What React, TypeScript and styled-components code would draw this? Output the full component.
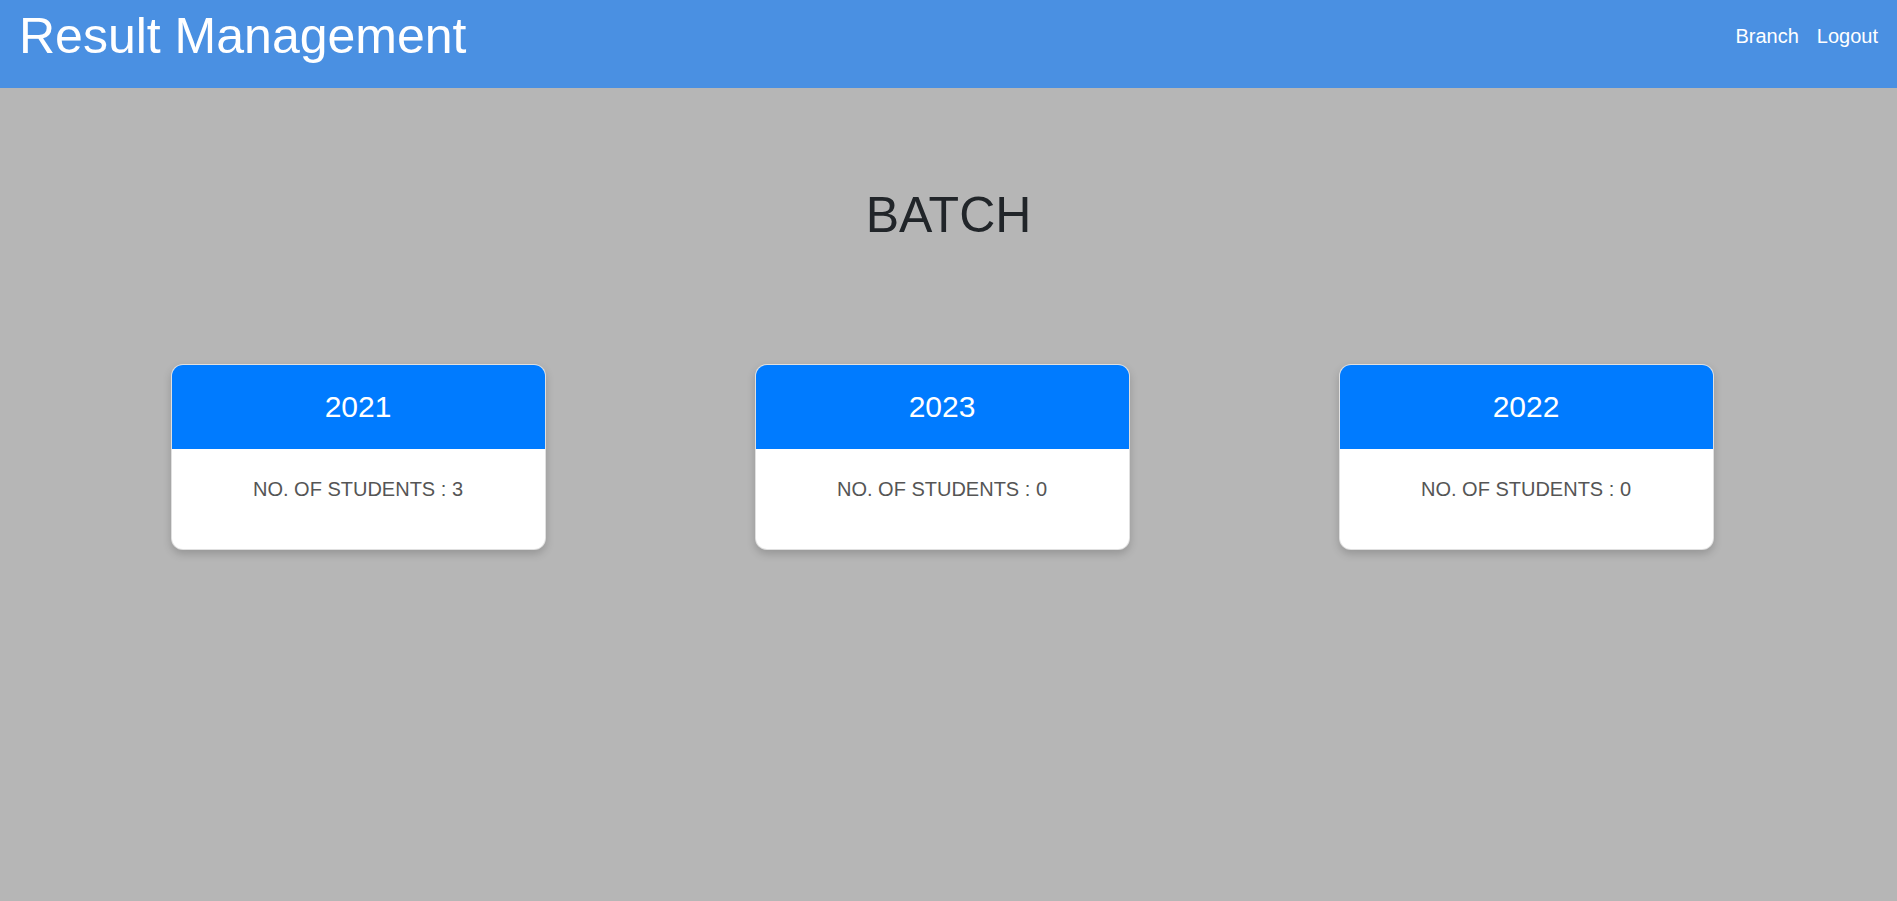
import styled, { createGlobalStyle } from "styled-components";

const batches = [
    { year: "2021", students: 3 },
    { year: "2023", students: 0 },
    { year: "2022", students: 0 },
];

export default function App() {
    return (
        <>
            <GlobalStyle />
            <Header>
                <Title>Result Management</Title>
                <Nav>
                    <NavLink href="#">Branch</NavLink>
                    <NavLink href="#">Logout</NavLink>
                </Nav>
            </Header>

            <Main>
                <Heading>BATCH</Heading>
                <CardRow>
                    {batches.map((batch) => (
                        <Card key={batch.year}>
                            <CardHeader>{batch.year}</CardHeader>
                            <CardBody>NO. OF STUDENTS : {batch.students}</CardBody>
                        </Card>
                    ))}
                </CardRow>
            </Main>
        </>
    );
}

const GlobalStyle = createGlobalStyle`
    * {
        box-sizing: border-box;
    }

    html, body {
        margin: 0;
        padding: 0;
        min-height: 100%;
        background: #b6b6b6;
        font-family: "Liberation Sans", Arial, sans-serif;
    }
`;

const Header = styled.header`
    height: 88px;

    display: flex;
    justify-content: space-between;
    align-items: flex-start;

    padding: 8px 19px 0 19px;

    background-color: #4a90e2;
`;

const Title = styled.h1`
    margin: 0;

    color: white;
    font-size: 50px;
    font-weight: 400;
    line-height: 1.15;
`;

const Nav = styled.nav`
    display: flex;
    gap: 18px;

    margin-top: 17px;
`;

const NavLink = styled.a`
    color: white;
    font-size: 20px;
    line-height: 23px;
    text-decoration: none;
`;

const Main = styled.main`
    display: flex;
    flex-direction: column;
    align-items: center;

    padding-top: 97px;
    min-height: 813px;
`;

const Heading = styled.h2`
    margin: 0 0 119px;

    color: #212529;
    font-size: 50px;
    font-weight: 400;
    line-height: 60px;
`;

const CardRow = styled.div`
    width: 100%;

    display: flex;
    justify-content: center;
    gap: 209px;

    padding-right: 13px;
`;

const Card = styled.div`
    width: 375px;

    background: white;
    border: 1px solid rgba(0, 0, 0, 0.12);
    border-radius: 12px;
    box-shadow: 0 4px 8px rgba(0, 0, 0, 0.18);

    overflow: hidden;
`;

const CardHeader = styled.div`
    height: 84px;

    display: flex;
    align-items: center;
    justify-content: center;

    color: white;
    font-size: 30px;
    background-color: #007bff;
`;

const CardBody = styled.div`
    height: 100px;

    padding-top: 25px;

    color: #555;
    font-size: 20px;
    line-height: 30px;
    text-align: center;
`;
